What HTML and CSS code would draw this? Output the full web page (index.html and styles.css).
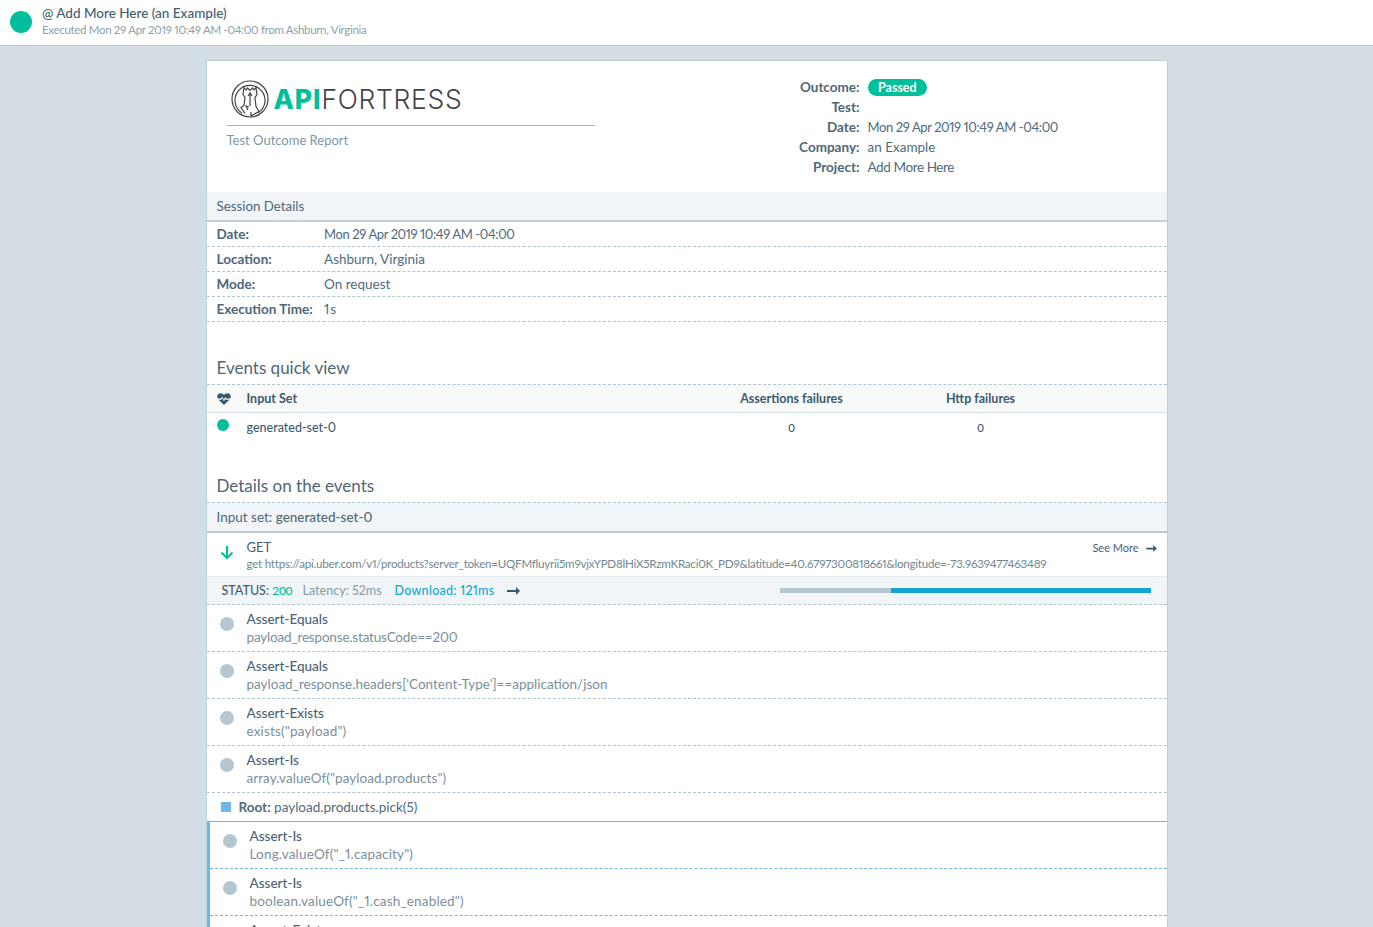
FILE: index.html
```html
<!DOCTYPE html>
<html lang="en">
<head>
<meta charset="utf-8">
<title>API Fortress Test Outcome Report</title>
<link rel="stylesheet" href="styles.css">
</head>
<body>
<header class="topbar">
  <span class="dot dot-big"></span>
  <div class="topbar-text">
    <div class="topbar-title">@ Add More Here (an Example)</div>
    <div class="topbar-sub">Executed Mon 29 Apr 2019 10:49 AM -04:00 from Ashburn, Virginia</div>
  </div>
</header>
<main class="card">
  <section class="head">
    <div class="brand">
      <div class="logo">
        <svg class="logo-mark" width="38" height="38" viewBox="0 0 38 38" fill="none" stroke="#444" stroke-width="1.2">
          <circle cx="19" cy="19" r="18"/>
          <path d="M11 33 A15 15 0 1 1 27 33"/>
          <path d="M13 7.5l2 2.5 1.5-2 2.500 2.500 2.500-2.500 1.500 2 2-2.500 1 7-2 3 1 9 3 5-8 4.500V32"/>
          <path d="M13 7.500l-1 7 2 3-1 8-3 2 4 6"/>
          <path d="M19 12v14M17 16l2-3 2 3M17 30l-2-4 3 1"/>
        </svg>
        <span class="logo-text"><b>API</b>FORTRESS</span>
      </div>
      <div class="brand-sub">Test Outcome Report</div>
    </div>
    <dl class="meta">
      <dt>Outcome:</dt><dd><span class="pill">Passed</span></dd>
      <dt>Test:</dt><dd></dd>
      <dt>Date:</dt><dd class="date">Mon 29 Apr 2019 10:49 AM -04:00</dd>
      <dt>Company:</dt><dd>an Example</dd>
      <dt>Project:</dt><dd class="tight">Add More Here</dd>
    </dl>
  </section>

  <div class="band band-session">Session Details</div>
  <div class="kv"><span class="k">Date:</span><span class="date">Mon 29 Apr 2019 10:49 AM -04:00</span></div>
  <div class="kv"><span class="k">Location:</span><span>Ashburn, Virginia</span></div>
  <div class="kv"><span class="k">Mode:</span><span>On request</span></div>
  <div class="kv"><span class="k">Execution Time:</span><span class="wide-1s">1s</span></div>

  <h2 class="title title-events">Events quick view</h2>
  <div class="grid-row grid-head">
    <span class="cell-icon">
      <svg width="14" height="12" viewBox="0 0 14 12"><path fill="#37566a" d="M7 12 1.600 6.800h2.900l.9-1.500 1.500 3 1.400-2.400.6.900h3.500zM.8 5.600C-.6 3 .9.200 3.600.200 5 .200 6.200 1 7 2c.8-1 2-1.800 3.400-1.800 2.700 0 4.200 2.800 2.800 5.400H9.400L8.300 3.900 6.800 6.500 5.500 3.800 3.800 5.600z"/></svg>
    </span>
    <span>Input Set</span>
    <span class="c">Assertions failures</span>
    <span class="c">Http failures</span>
  </div>
  <div class="grid-row grid-body">
    <span class="cell-icon"><span class="dot dot-small"></span></span>
    <span>generated-set-0</span>
    <span class="c zero">0</span>
    <span class="c zero">0</span>
  </div>

  <h2 class="title title-details">Details on the events</h2>
  <div class="band band-input">Input set: <strong>generated-set-0</strong></div>

  <div class="req">
    <svg class="req-arrow" width="14" height="15" viewBox="0 0 14 15" fill="none" stroke="#00bf9a" stroke-width="2"><path d="M7 1v12M1.500 7.500 7 13l5.500-5.500"/></svg>
    <div class="req-body">
      <div class="req-method">GET</div>
      <div class="req-url">get https://api.uber.com/v1/products?server_token=UQFMfluyrii5m9vjxYPD8lHiX5RzmKRaci0K_PD9&amp;latitude=40.6797300818661&amp;longitude=-73.9639477463489</div>
    </div>
    <div class="see-more">See More
      <svg width="11" height="7" viewBox="0 0 12 8"><path fill="#37566a" d="M0 3h8V0l4 4-4 4V5H0z"/></svg>
    </div>
  </div>
  <div class="status">
    <span class="st-label">STATUS: <span class="st-green">200</span></span>
    <span class="st-grey">Latency: 52ms</span>
    <span class="st-blue">Download: 121ms</span>
    <svg class="st-arrow" width="13" height="8" viewBox="0 0 13 8"><path fill="#37566a" d="M0 3h9V0l4 4-4 4V5H0z"/></svg>
    <div class="bar"><span class="bar-latency"></span><span class="bar-download"></span></div>
  </div>

  <div class="assert"><span class="dot dot-grey"></span><div><div class="a-name">Assert-Equals</div><div class="a-expr a-tight">payload_response.statusCode==200</div></div></div>
  <div class="assert"><span class="dot dot-grey"></span><div><div class="a-name">Assert-Equals</div><div class="a-expr">payload_response.headers['Content-Type']==application/json</div></div></div>
  <div class="assert"><span class="dot dot-grey"></span><div><div class="a-name">Assert-Exists</div><div class="a-expr a-wide">exists("payload")</div></div></div>
  <div class="assert"><span class="dot dot-grey"></span><div><div class="a-name">Assert-Is</div><div class="a-expr a-slight">array.valueOf("payload.products")</div></div></div>

  <div class="root"><span class="root-box"></span><span><strong>Root:</strong> payload.products.pick(5)</span></div>
  <div class="nested">
    <div class="assert assert-nested"><span class="dot dot-grey"></span><div><div class="a-name">Assert-Is</div><div class="a-expr a-wide">Long.valueOf("_1.capacity")</div></div></div>
    <div class="assert assert-nested"><span class="dot dot-grey"></span><div><div class="a-name">Assert-Is</div><div class="a-expr a-wide">boolean.valueOf("_1.cash_enabled")</div></div></div>
    <div class="assert assert-nested"><span class="dot dot-grey"></span><div><div class="a-name">Assert-Exists</div><div class="a-expr a-wide">exists("_1.description")</div></div></div>
  </div>
</main>
</body>
</html>
```
FILE: styles.css
```css
* { box-sizing: border-box; }
html, body { height: 100%; }
body {
  margin: 0;
  height: 927px;
  overflow: hidden;
  background: #d5dde4;
  font-family: "Lato", "Liberation Sans", sans-serif;
  font-size: 13.5px;
  font-variant-numeric: proportional-nums;
  color: #4f6b7c;
}
.dot { display: block; border-radius: 50%; flex: none; }
.dot-big { width: 22px; height: 22px; background: #00bf9a; }
.dot-small { width: 12px; height: 12px; background: #00bf9a; }
.dot-grey { width: 14px; height: 14px; background: #b6c6d1; margin-top: -8px; }
.date { font-size: 13px; letter-spacing: -.4px; }
.tight { letter-spacing: -.4px; }
.wide-1s { letter-spacing: 1px; }

.topbar {
  height: 46px;
  background: #fff;
  border-bottom: 1px solid #bccad2;
  display: flex;
  align-items: center;
  gap: 10px;
  padding: 0 0 2px 10px;
}
.topbar-title { font-size: 13.5px; line-height: 15px; color: #44606f; font-weight: 500; }
.topbar-sub { font-size: 11.5px; line-height: 16px; margin-top: 1px; letter-spacing: -.32px; color: #8fa0aa; }

.card {
  width: 962px;
  margin: 14px auto 0;
  background: #fff;
  border: 1px solid #bfd0d8;
  border-bottom: 0;
}
.head { height: 131px; display: flex; }
.brand { width: 388px; padding: 19px 0 0 20px; }
.logo {
  width: 368px;
  height: 46px;
  padding-left: 4px;
  border-bottom: 1px solid #a7b4bb;
  display: flex;
  gap: 5px;
}
.logo-mark { flex: none; }
.logo-text {
  font-family: "Inter", "Liberation Sans", sans-serif;
  font-size: 26.5px;
  line-height: 38px;
  font-weight: 300;
  color: #444;
  letter-spacing: .7px;
}
.logo-text b { color: #00bf9a; font-weight: 800; letter-spacing: .9px; }
.brand-sub { margin-top: 6px; font-size: 13px; color: #7e97a6; }
.meta {
  margin: 16px 0 0 182px;
  display: grid;
  grid-template-columns: 83px auto;
  column-gap: 8px;
  grid-auto-rows: 20px;
  align-content: start;
  line-height: 20px;
}
.meta dt { text-align: right; font-weight: 700; color: #4f6676; white-space: nowrap; }
.meta dd { margin: 0; white-space: nowrap; }
.pill {
  display: inline-block;
  height: 17px;
  line-height: 17px;
  padding: 0 10.500px;
  border-radius: 9px;
  background: #00bf9a;
  color: #fff;
  font-size: 12.500px;
  font-weight: 700;
}

.band { background: #f1f5f7; padding-left: 10px; color: #4f6676; }
.band-session { height: 30px; line-height: 28px; border-bottom: 2px solid #c3d0d7; font-size: 13.300px; }
.band-input { height: 30px; line-height: 29px; border-bottom: 2px solid #bccad2; }
.band-input strong { font-weight: 500; }
.kv {
  height: 25px;
  display: flex;
  align-items: center;
  padding-left: 10px;
  border-bottom: 1px dashed #afc4cf;
}
.k { width: 107.500px; flex: none; font-weight: 700; color: #4f6676; white-space: nowrap; }

.title {
  margin: 0;
  padding: 0 0 4px 10px;
  display: flex;
  align-items: flex-end;
  font-size: 17px;
  font-weight: 400;
  line-height: 24px;
  color: #4f6676;
  border-bottom: 1px dashed #afc4cf;
}
.title-events { height: 63px; }
.title-details { height: 61px; }

.grid-row {
  display: grid;
  grid-template-columns: 40px 472px 146px 232px;
  align-items: center;
  font-size: 12.500px;
  color: #3f5a6a;
}
.grid-head { height: 28px; background: #f8f9f9; border-bottom: 1px solid #d4e1e8; font-weight: 700; }
.grid-body { height: 29px; font-weight: 500; }
.cell-icon { padding-left: 10px; display: flex; }
.grid-body .cell-icon { margin-top: -5px; }
.c { text-align: center; }
.zero { font-size: 11.500px; font-variant-numeric: lining-nums; }

.req { height: 44px; padding: 5px 10px 0 13px; display: flex; border-bottom: 1px solid #e4ebee; }
.req-arrow { flex: none; margin: 7px 0 0; }
.req-body { margin-left: 13px; flex: 1; }
.req-method { font-size: 13px; line-height: 18px; color: #44606f; }
.req-url { font-size: 11.600px; line-height: 15px; letter-spacing: -.245px; color: #71878f; white-space: nowrap; }
.see-more { font-size: 11px; line-height: 18px; color: #44606f; white-space: nowrap; margin-top: 1px; }
.see-more svg { margin-left: 4px; }

.status {
  height: 28px;
  background: #f1f5f7;
  border-bottom: 1px dashed #afc4cf;
  display: flex;
  align-items: center;
  padding-left: 15px;
  font-size: 12.500px;
  font-weight: 500;
  white-space: nowrap;
}
.st-label { color: #44606f; width: 81px; }
.st-green { color: #00bf9a; font-size: 12px; font-variant-numeric: lining-nums; letter-spacing: -.3px; }
.st-grey { color: #8ea0aa; width: 92px; }
.st-blue { color: #12a7d1; width: 112px; letter-spacing: .27px; }
.st-arrow { flex: none; }
.bar { margin-left: 260px; width: 371px; height: 5px; display: flex; }
.bar-latency { width: 111px; background: #b6c6d1; }
.bar-download { flex: 1; background: #12a7d1; }

.assert {
  height: 47px;
  display: flex;
  align-items: center;
  gap: 13px;
  padding-left: 13px;
  border-bottom: 1px dashed #afc4cf;
}
.a-name { line-height: 18px; color: #4a6474; font-weight: 500; }
.a-expr { line-height: 18px; color: #7b8f9b; }
.a-tight { letter-spacing: -.18px; }
.a-wide { letter-spacing: .17px; }
.a-slight { letter-spacing: .06px; }
.root {
  height: 29px;
  display: flex;
  align-items: center;
  gap: 8px;
  padding-left: 14px;
  border-bottom: 1px solid #6fb7e9;
}
.root strong { font-weight: 700; }
.root-box { width: 10px; height: 10px; background: #6fb7e9; }
.nested { border-left: 3px solid #6fb7e9; }
.assert-nested { border-bottom-color: #6fb7e9; }
```
